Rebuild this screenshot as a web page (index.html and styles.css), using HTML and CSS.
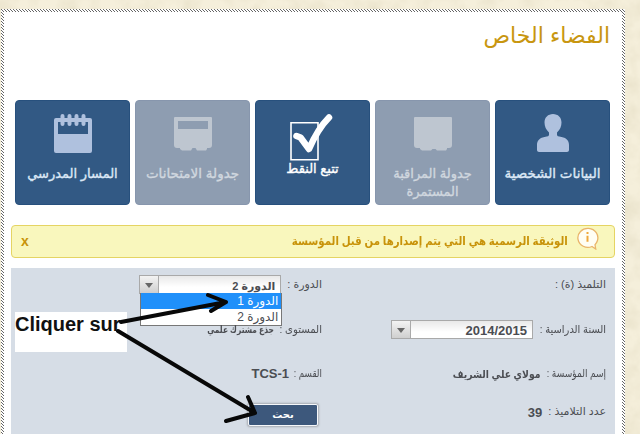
FILE: index.html
```
<!DOCTYPE html>
<html lang="ar" dir="rtl">
<head>
<meta charset="utf-8">
<title>الفضاء الخاص</title>
<link rel="stylesheet" href="styles.css">
</head>
<body>
<svg class="paper" width="640" height="434" aria-hidden="true">
  <filter id="grain"><feTurbulence type="fractalNoise" baseFrequency="0.05" numOctaves="4" seed="4"/><feColorMatrix values="0 0 0 0 .66  0 0 0 0 .6  0 0 0 0 .42  .6 0 0 0 -.22"/></filter>
  <rect width="640" height="434" filter="url(#grain)"/>
</svg>
<main class="frame">
  <div class="sheet">
    <h1><span>الفضاء الخاص</span></h1>
    <nav class="tiles">
      <a class="tile">
        <svg width="38" height="40" viewBox="0 0 38 40"><path d="M19 1c5 0 8.500 3.500 8.500 8.500 0 4-1.500 7-4.500 10v2c0 1.500 1 2 4.500 2.500C33 25 35 28 35 32v5c0 1-1 2-2 2H5c-1 0-2-1-2-2v-5c0-4 2-7 7.500-8 3.500-.5 4.500-1 4.500-2.500v-2c-3-3-4.500-6-4.500-10C10.500 4.500 14 1 19 1z"/></svg>
        <span class="cap c1">البيانات الشخصية</span>
      </a>
      <a class="tile off">
        <svg width="38" height="40" viewBox="0 0 38 40"><path d="M1 4h36a1 1 0 0 1 1 1v27a3 3 0 0 1-3 3h-2v1l-1 1.500h-9l-1.500-1.500h-3L17 37.500H8L6 36v-1H3a3 3 0 0 1-3-3V5a1 1 0 0 1 1-1z"/></svg>
        <span class="cap">جدولة المراقبة<br>المستمرة</span>
      </a>
      <a class="tile current">
        <svg width="44" height="48" viewBox="0 0 44 48"><path class="box" d="M2 8.700h27v37H2z"/><path class="tick" d="M7.500 22l4 1.500 8.500 11.500Q29 14.500 40 3.500"/></svg>
        <span class="cap">تتبع النقط</span>
      </a>
      <a class="tile off">
        <svg width="38" height="40" viewBox="0 0 38 40"><path fill-rule="evenodd" d="M1 4h36a1 1 0 0 1 1 1v27a3 3 0 0 1-3 3h-2v1l-1 1.500h-9l-1.500-2.500h-3L17 37.500H8L6 36v-1H3a3 3 0 0 1-3-3V5a1 1 0 0 1 1-1zM4 8v8h30V8z"/></svg>
        <span class="cap c4">جدولة الامتحانات</span>
      </a>
      <a class="tile">
        <svg width="38" height="40" viewBox="0 0 38 40"><path fill-rule="evenodd" d="M2 5h34q2 0 2 2v31q0 2-2 2H2q-2 0-2-2V7q0-2 2-2zM4 9v12h30V9z"/><path class="rings" d="M8.500 3v8M15.500 3v8M22.500 3v8M29.500 3v8"/></svg>
        <span class="cap">المسار المدرسي</span>
      </a>
    </nav>
    <div class="notice">
      <svg width="23" height="23" viewBox="0 0 23 23"><path d="M16 19.500A10 9.500 0 1 1 21.300 14c-.6 1.800-1.300 2.700-2.300 3.700l.7 4.300z" fill="#fffef4" stroke="#e9b56a" stroke-width="1.300"/><path d="M11.500 8.800v6M11.500 5v2" stroke="#efa83c" stroke-width="2"/></svg>
      <span class="msg">الوثيقة الرسمية هي التي يتم إصدارها من قبل المؤسسة</span>
      <span class="close">x</span>
    </div>
    <form class="filters">
      <div class="row"><label>التلميذ (ة) :</label></div>
      <div class="row"><label>الدورة :</label>
        <div class="select term"><b>الدورة 2</b><i></i>
          <div class="menu"><div class="opt hot">الدورة 1</div><div class="opt">الدورة 2</div></div>
        </div>
      </div>
      <div class="row"><label class="l2">السنة الدراسية :</label><div class="select year"><b dir="ltr">2014/2015</b><i></i></div></div>
      <div class="row"><label class="l6">المستوى :</label><b class="level">جذع مشترك علمي</b></div>
      <div class="row"><label class="l3">إسم المؤسسة :</label><b class="school">مولاي علي الشريف</b></div>
      <div class="row"><label class="l7">القسم :</label><b class="latin" dir="ltr">TCS-1</b></div>
      <div class="row"><label>عدد التلاميذ :</label><b class="latin">39</b></div>
      <div class="row"><button type="button">بحث</button></div>
    </form>
  </div>
</main>
<div class="note" dir="ltr">Cliquer sur</div>
<svg class="arrows" width="640" height="434" aria-hidden="true">
  <path d="M121 322L226 302M208 295L226 302 211 311M118 331L255 413M248 397L255 413 226 421"/>
</svg>
</body>
</html>
```

FILE: styles.css
```
* { box-sizing: border-box; }
body {
  margin: 0;
  width: 640px;
  height: 434px;
  overflow: hidden;
  background: #f5efdb;
  font-family: "Liberation Sans", "DejaVu Sans", sans-serif;
  color: #4b4d52;
}
.paper { position: absolute; left: 0; top: 0; }
.frame {
  --dot: conic-gradient(from 270deg at 1px 1px, #666 90deg, transparent 0);
  position: relative;
  width: 624px;
  height: 425px;
  margin: 9px 15px 0 0;
  padding: 3px 3px 0;
  background:
    var(--dot) 0 0 / 3px 3px,
    var(--dot) 1px 1px / 3px 3px,
    var(--dot) 2px 2px / 3px 3px,
    #fff;
}
.sheet { height: 422px; background: #fff; padding: 0 7px; }
h1 {
  margin: 0;
  height: 88px;
  padding: 7px 5px 0 0;
  font-size: 22px;
  line-height: 34px;
  font-weight: 400;
  color: #c8960f;
}
h1 span { display: inline-block; white-space: nowrap; }
.tiles { display: flex; gap: 5px; padding-right: 5px; }
.tile {
  width: 115px;
  height: 105px;
  flex: none;
  display: flex;
  flex-direction: column;
  align-items: center;
  padding-top: 12px;
  border-radius: 4px;
  background: #325984;
  border: 1px solid #27507d;
  color: #dce8f6;
  fill: #afc1de;
}
.off { background: #8e9db1; border-color: #8796ad; color: #d0d7df; fill: #bec6d0; }
.cap {
  margin-top: 12px;
  font-size: 13px;
  line-height: 18px;
  white-space: nowrap;
  text-align: center;
  -webkit-text-stroke: .35px currentColor;
}
.c1, .c4 { font-size: 13.500px; }
.current { color: #fff; padding-top: 13px; }
.current .cap { margin-top: -2px; }
.current svg { margin-right: 3px; }
.box { fill: none; stroke: #fff; stroke-width: 1.600px; }
.tick { fill: none; stroke: #fff; stroke-width: 6.500px; stroke-linecap: round; stroke-linejoin: round; }
.rings { stroke: #afc1de; stroke-width: 4px; stroke-linecap: round; }
.notice {
  display: flex;
  align-items: center;
  height: 33px;
  margin-top: 20px;
  padding: 0 15px 2px 9px;
  border: 1px solid #e5d463;
  border-radius: 4px;
  background: #f9f7bd;
  color: #c8930a;
}
.notice svg { margin-top: -4px; }
.msg {
  margin-right: 8px;
  font-size: 12px;
  font-weight: 700;
  white-space: nowrap;
  transform: scaleX(.85);
  transform-origin: right;
}
.close { margin-right: auto; font: 700 14px "Liberation Sans"; }
.filters {
  display: grid;
  grid-template-columns: 284px 1fr;
  grid-template-rows: 44px 44px 40px 38px;
  height: 166px;
  margin-top: 10px;
  padding: 0 9px;
  background: #d6dde6;
  font-size: 11px;
}
.row { display: flex; align-items: flex-start; padding-top: 7px; white-space: nowrap; }
.row:nth-child(n+3) { padding-top: 8px; }
.row label, .row > b { line-height: 18px; transform-origin: right; }
.row > b { margin-right: 5px; padding-top: 1px; }
.row .latin { font-size: 13px; }
.l2 { width: 66px; transform: scaleX(.9); }
.l3 { width: 60px; transform: scaleX(.82); }
.l6 { width: 42px; transform: scaleX(.92); }
.l7 { width: 28px; transform: scaleX(.8); }
.row > .school { font-size: 11px; transform: scaleX(.84); margin-right: 6px; }
.row > .level { font-size: 10px; transform: scaleX(.75); margin-right: 6px; }
.row:nth-child(n+7) label { padding-top: 0; margin-top: -2px; }
.row:nth-child(n+7) b { margin-top: -1px; margin-right: 6px; }
.select {
  position: relative;
  display: flex;
  height: 19px;
  margin: 0 7px 0 0;
  border: 1px solid #a9a9a9;
  background: linear-gradient(#e9e9e9, #fff 65%);
}
.select b { flex: 1; padding: 2px 5px 0 0; line-height: 18px; }
.select i {
  width: 19px;
  flex: none;
  border-right: 1px solid #aaa;
  background: linear-gradient(#f3f3f3, #cfcfcf);
}
.select i::after {
  content: "";
  display: block;
  margin: 7px 5px 0 0;
  width: 0;
  border: 4px solid transparent;
  border-top: 5px solid #666;
  border-bottom: 0;
}
.year { width: 142px; }
.year b { font-size: 13px; text-align: right; padding-right: 5px; padding-top: 1px; }
.term { width: 142px; margin-right: 6px; }
.term b { font-size: 11px; padding-top: 1px; }
.menu {
  position: absolute;
  top: 17px;
  right: -2px;
  width: 142px;
  height: 33px;
  border: 1px solid #777;
  border-top: 0;
  background: #fff;
}
.opt { height: 16px; line-height: 16px; padding-right: 3px; font-size: 12px; }
.hot { background: #2090fa; color: #fff; }
button {
  width: 70px;
  height: 22px;
  margin: 0 4px 0 0;
  padding: 0;
  border: 1px solid #f5f7fa;
  border-radius: 2px;
  background: #3d587c;
  box-shadow: 0 0 2px 1px #a7abb2;
  color: #fff;
  font: 700 10px/18px "DejaVu Sans", sans-serif;
}
.note {
  position: absolute;
  left: 15px;
  top: 312px;
  width: 112px;
  height: 40px;
  background: #fff;
  color: #111;
  font: 700 20px/24px "Liberation Sans", sans-serif;
  white-space: nowrap;
}
.arrows { position: absolute; left: 0; top: 0; z-index: 3; }
.arrows path { fill: none; stroke: #080808; stroke-width: 4px; stroke-linecap: round; stroke-linejoin: round; }
```
